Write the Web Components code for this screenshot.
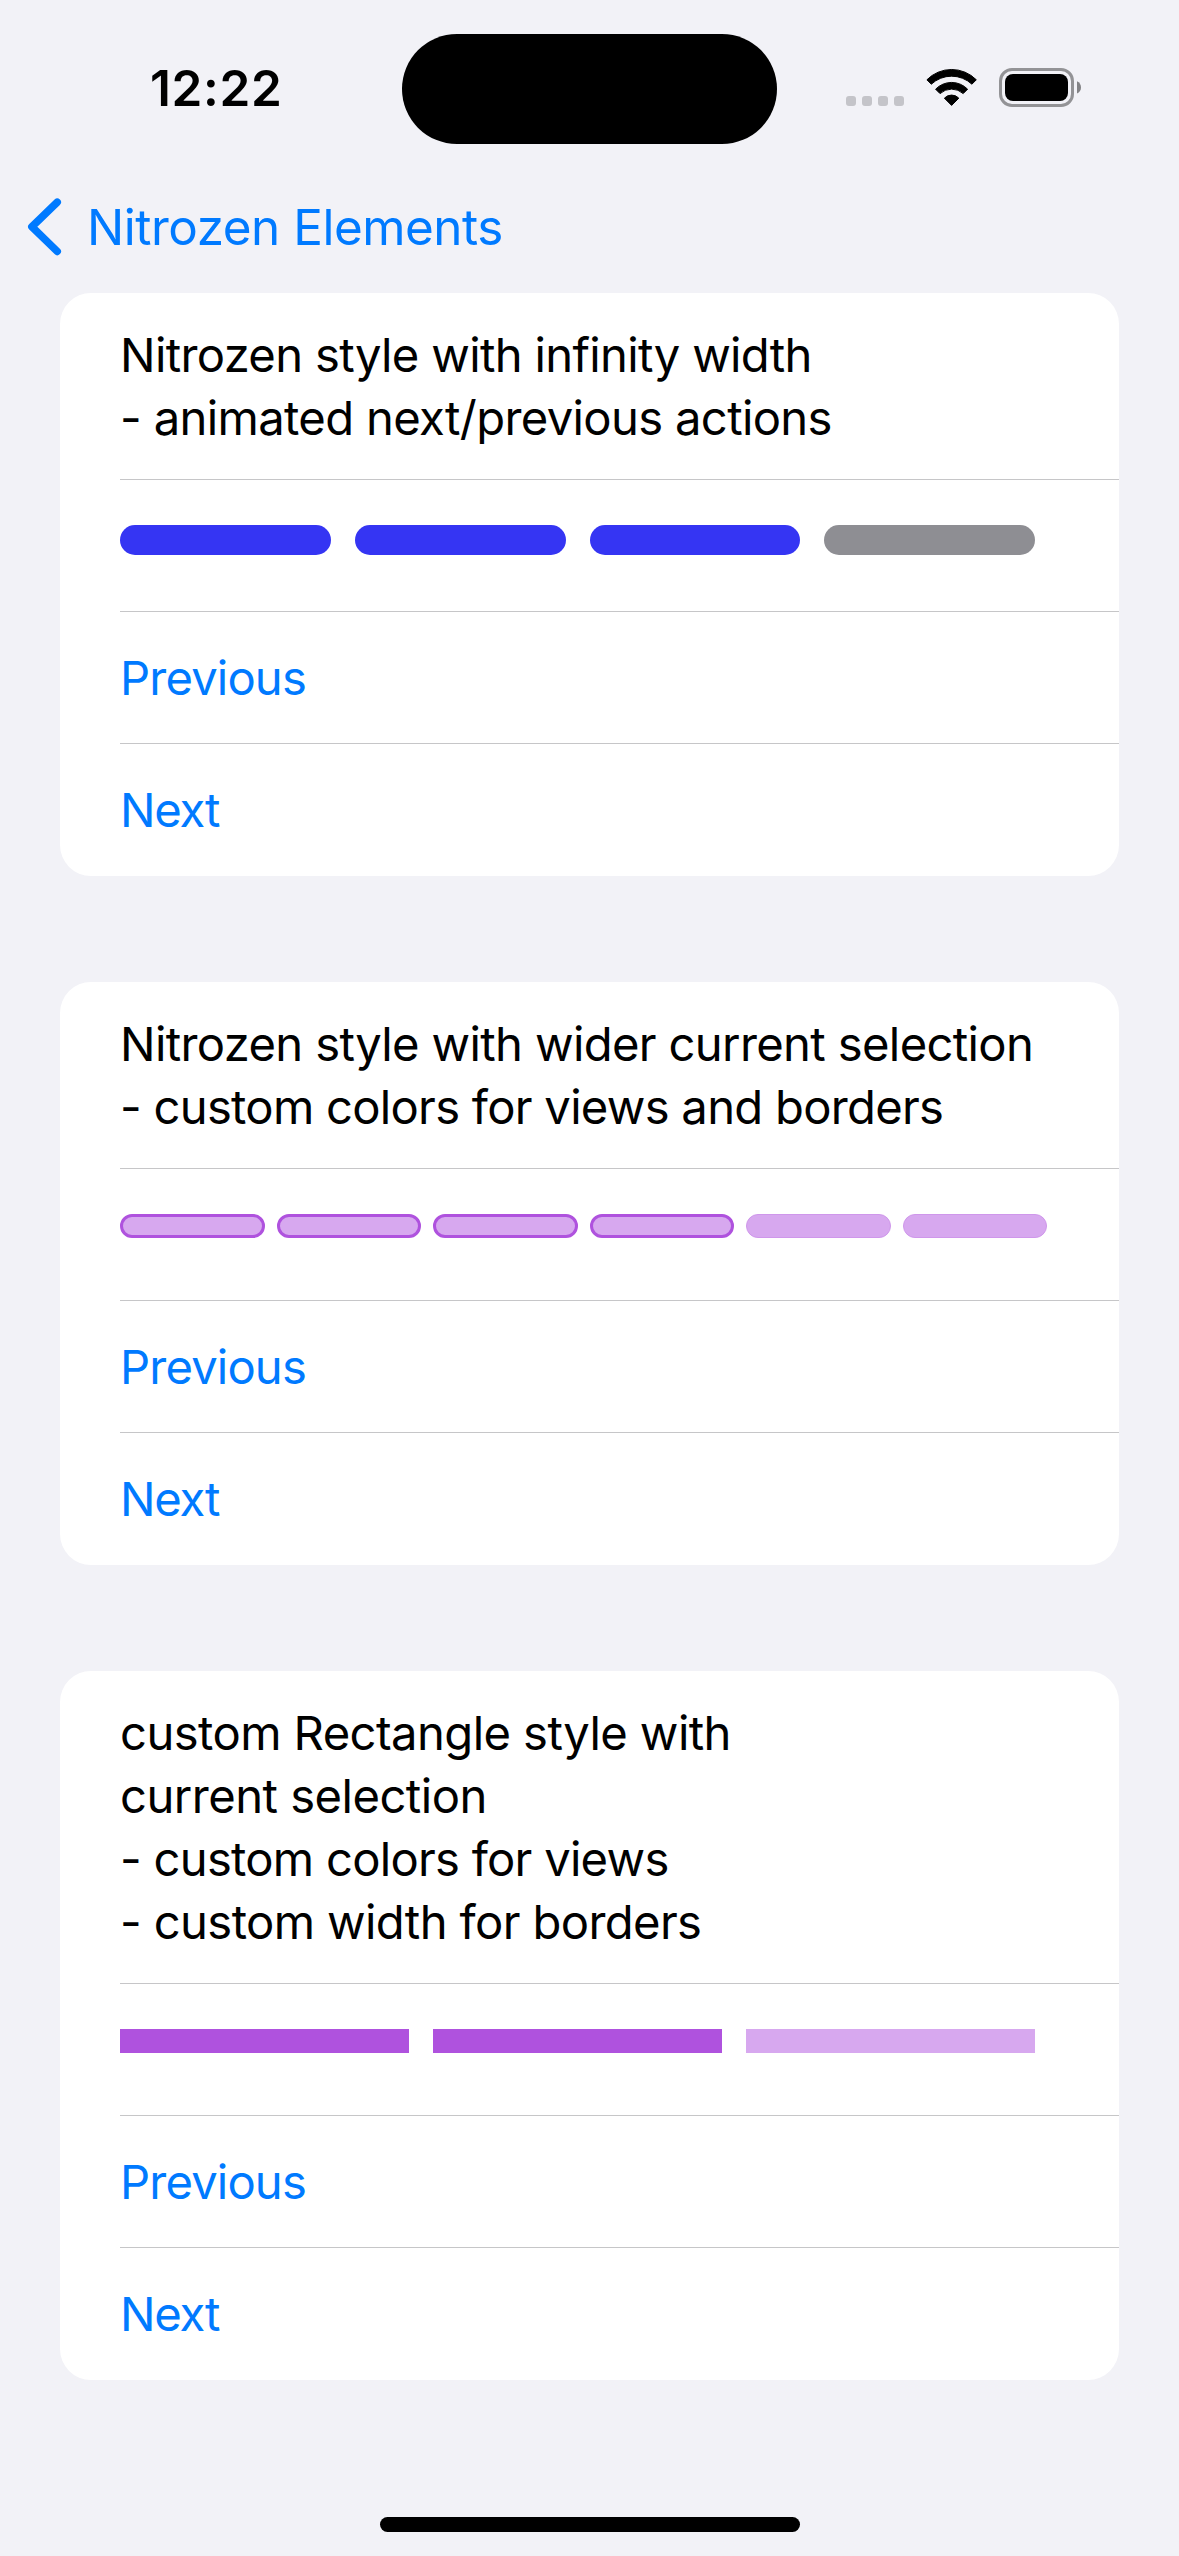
<!DOCTYPE html>
<html lang="en">
<head>
<meta charset="utf-8">
<title>Nitrozen Elements</title>
<style>
  html, body { margin: 0; background: #f2f2f7; }
  body { width: 1179px; height: 2556px; overflow: hidden; font-family: Inter, "Liberation Sans", sans-serif; color: #000; }
</style>
</head>
<body>
<app-screen>
  <status-bar slot="status" time="12:22"></status-bar>
  <nav-bar slot="nav">Nitrozen Elements</nav-bar>

  <list-card>
    <title-row>
      <text-line style="--ls:-.67px">Nitrozen style with infinity width</text-line>
      <text-line style="--ls:-.66px">- animated next/previous actions</text-line>
    </title-row>
    <step-bar total="4" current="3" kind="pill"></step-bar>
    <action-row style="--ls:-.85px">Previous</action-row>
    <action-row style="--ls:-1.2px">Next</action-row>
  </list-card>

  <list-card>
    <title-row>
      <text-line style="--ls:-.65px">Nitrozen style with wider current selection</text-line>
      <text-line style="--ls:-.73px">- custom colors for views and borders</text-line>
    </title-row>
    <step-bar total="6" current="4" kind="outlined"></step-bar>
    <action-row style="--ls:-.85px">Previous</action-row>
    <action-row style="--ls:-1.2px">Next</action-row>
  </list-card>

  <list-card>
    <title-row>
      <text-line style="--ls:-.58px">custom Rectangle style with</text-line>
      <text-line style="--ls:-.53px">current selection</text-line>
      <text-line style="--ls:-.74px">- custom colors for views</text-line>
      <text-line style="--ls:-.62px">- custom width for borders</text-line>
    </title-row>
    <step-bar total="3" current="2" kind="rect"></step-bar>
    <action-row style="--ls:-.85px">Previous</action-row>
    <action-row style="--ls:-1.2px">Next</action-row>
  </list-card>

  <home-indicator slot="home"></home-indicator>
</app-screen>

<script>
class Base extends HTMLElement {
  connectedCallback() {
    if (!this.shadowRoot) this.attachShadow({ mode: 'open' }).innerHTML = this.render();
  }
}

customElements.define('app-screen', class extends Base {
  render() {
    return `<style>
      :host { display: flex; flex-direction: column; height: 2556px; background: #f2f2f7; }
      main { display: flex; flex-direction: column; gap: 106px; padding: 0 60px; flex: 1; }
    </style>
    <slot name="status"></slot><slot name="nav"></slot>
    <main><slot></slot></main>
    <slot name="home"></slot>`;
  }
});

customElements.define('status-bar', class extends Base {
  render() {
    return `<style>
      :host { display: grid; grid-template-columns: 1fr 375px 1fr; height: 177px; box-sizing: border-box; padding-top: 34px; align-items: start; }
      .time { padding: 24px 0 0 150px; font-size: 49.5px; line-height: 60px; font-weight: 600; letter-spacing: .65px; }
      .island { height: 110px; border-radius: 55px; background: #000; }
      .icons { display: flex; justify-content: flex-end; padding: 33px 97px 0 0; }
      svg { display: block; }
    </style>
    <div class="time">${this.getAttribute('time')}</div>
    <div class="island"></div>
    <div class="icons">
      <svg width="237" height="41" viewBox="845 67 237 41">
        <g fill="#c4c4c9">
          <rect x="846" y="96" width="10" height="10" rx="3"/><rect x="862" y="96" width="10" height="10" rx="3"/>
          <rect x="878" y="96" width="10" height="10" rx="3"/><rect x="894" y="96" width="10" height="10" rx="3"/>
        </g>
        <g transform="translate(926 69)" stroke="#000" stroke-width="1" stroke-linejoin="round">
          <path d="M.9 10.8A34.7 34.7 0 0 1 50.3 10.8L45.9 15.2A29.7 29.7 0 0 0 5.3 15.2Z"/>
          <path d="M9.6 20.2A22.3 22.3 0 0 1 41.6 20.2L37.2 24.6A17.2 17.2 0 0 0 14 24.6Z"/>
          <path d="M18.4 29.2A9.8 9.8 0 0 1 32.8 29.2L25.6 36.4Z"/>
        </g>
        <rect x="1000.5" y="69.5" width="72" height="36" rx="11.5" fill="none" stroke="#939396" stroke-width="3"/>
        <rect x="1005" y="74" width="63" height="27" rx="8"/>
        <path d="M1077 81.3C1079.6 82.4 1081 84.8 1081 87.4S1079.6 92.4 1077 93.5Z" fill="#838386"/>
      </svg>
    </div>`;
  }
});

customElements.define('nav-bar', class extends Base {
  render() {
    return `<style>
      :host { display: flex; height: 116px; box-sizing: border-box; padding: 20px 0 0 27px; align-items: flex-start; color: #007aff; }
      svg { display: block; flex: none; }
      span { margin-left: 24px; font-size: 49.4px; line-height: 60px; letter-spacing: -.47px; white-space: nowrap; }
    </style>
    <svg width="36" height="60" viewBox="27 197 36 60" fill="none" stroke="#007aff" stroke-width="7.6" stroke-linecap="round" stroke-linejoin="round"><path d="M57.2 202.2L31.9 226.8L57.2 251.4"/></svg>
    <span><slot></slot></span>`;
  }
});

customElements.define('list-card', class extends Base {
  render() {
    return `<style>
      :host { display: flex; flex-direction: column; background: #fff; border-radius: 31px; overflow: hidden; padding-left: 60px; }
      ::slotted(:not(:last-child)) { border-bottom: 1px solid #c6c6c8; }
      ::slotted(action-row:last-child) { padding-bottom: 1px; }
    </style><slot></slot>`;
  }
});

customElements.define('title-row', class extends Base {
  render() {
    return `<style>:host { display: flex; flex-direction: column; padding: 30px 0; }</style><slot></slot>`;
  }
});

customElements.define('text-line', class extends Base {
  render() {
    return `<style>:host { display: block; font-size: 47.2px; line-height: 63px; letter-spacing: var(--ls); white-space: nowrap; }</style><slot></slot>`;
  }
});

customElements.define('action-row', class extends Base {
  render() {
    return `<style>:host { display: flex; align-items: center; height: 131px; color: #007aff; font-size: 47.2px; line-height: 63px; letter-spacing: var(--ls); }</style><slot></slot>`;
  }
});

customElements.define('step-bar', class extends Base {
  render() {
    const total = +this.getAttribute('total'), current = +this.getAttribute('current');
    const steps = Array.from({ length: total }, (_, i) => `<i class="${i < current ? 'on' : ''}"></i>`).join('');
    return `<style>
      :host { display: block; height: 131px; }
      div { display: grid; grid-auto-flow: column; grid-auto-columns: minmax(0, 1fr); padding-top: 45px; gap: 24px; width: 915px; }
      i { box-sizing: border-box; height: 24px; background: #d7a8ef; }
      .pill i { height: 30px; border-radius: 15px; background: #8e8e93; }
      .pill .on { background: #3535f3; }
      .outlined { gap: 12px; width: 927px; }
      .outlined i { border-radius: 12px; border: 1px solid #cf97eb; }
      .outlined .on { border: 3px solid #af52de; }
      .rect .on { background: #af52de; }
    </style><div class="${this.getAttribute('kind')}">${steps}</div>`;
  }
});

customElements.define('home-indicator', class extends Base {
  render() {
    return `<style>
      :host { display: flex; justify-content: center; padding: 0 0 24px 1px; }
      div { width: 420px; height: 15px; border-radius: 8px; background: #000; }
    </style><div></div>`;
  }
});
</script>
</body>
</html>
